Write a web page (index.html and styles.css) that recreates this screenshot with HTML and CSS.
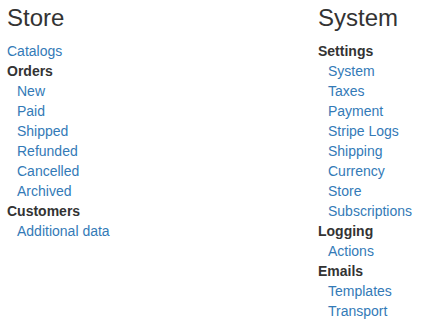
FILE: index.html
```html
<!DOCTYPE html>
<html>
<head>
<meta charset="utf-8">
<link rel="stylesheet" href="styles.css">
</head>
<body>
<div class="page">
  <section class="col">
    <h3 class="title">Store</h3>
    <ul class="menu">
      <li><a href="#">Catalogs</a></li>
      <li class="group">Orders</li>
      <li class="sub"><a href="#">New</a></li>
      <li class="sub"><a href="#">Paid</a></li>
      <li class="sub"><a href="#">Shipped</a></li>
      <li class="sub"><a href="#">Refunded</a></li>
      <li class="sub"><a href="#">Cancelled</a></li>
      <li class="sub"><a href="#">Archived</a></li>
      <li class="group">Customers</li>
      <li class="sub"><a href="#">Additional data</a></li>
    </ul>
  </section>
  <section class="col">
    <h3 class="title">System</h3>
    <ul class="menu">
      <li class="group">Settings</li>
      <li class="sub"><a href="#">System</a></li>
      <li class="sub"><a href="#">Taxes</a></li>
      <li class="sub"><a href="#">Payment</a></li>
      <li class="sub"><a href="#">Stripe Logs</a></li>
      <li class="sub"><a href="#">Shipping</a></li>
      <li class="sub"><a href="#">Currency</a></li>
      <li class="sub"><a href="#">Store</a></li>
      <li class="sub"><a href="#">Subscriptions</a></li>
      <li class="group">Logging</li>
      <li class="sub"><a href="#">Actions</a></li>
      <li class="group">Emails</li>
      <li class="sub"><a href="#">Templates</a></li>
      <li class="sub"><a href="#">Transport</a></li>
    </ul>
  </section>
</div>
</body>
</html>
```
FILE: styles.css
```css
html, body {
  margin: 0;
  padding: 0;
  background: #fff;
}
body {
  font-family: "Liberation Sans", Arial, sans-serif;
  font-size: 14px;
  line-height: 20px;
  color: #333;
}
.page {
  display: grid;
  grid-template-columns: 311px 1fr;
  padding: 5px 7px 0;
}
.title {
  margin: 0 0 10px;
  font-size: 24px;
  line-height: 1.1;
  font-weight: 400;
  color: #333;
}
.menu {
  list-style: none;
  margin: 0;
  padding: 0;
}
.menu a {
  color: #337ab7;
  text-decoration: none;
}
.group {
  font-weight: 700;
}
.sub {
  padding-left: 10px;
}
```
